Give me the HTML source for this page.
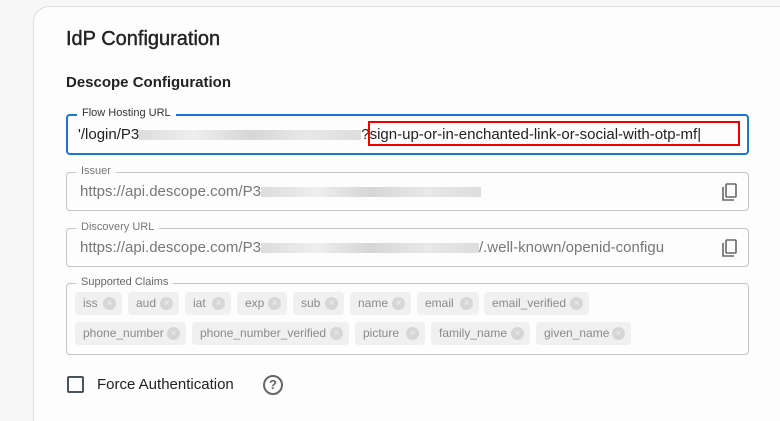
<!DOCTYPE html><html style="width:780px;height:421px;overflow:hidden"><head><style>
body{margin:0;width:780px;height:421px;background:#f7f7f7;font-family:"Liberation Sans",sans-serif;position:relative;overflow:hidden}
.card{position:absolute;left:33px;top:6px;width:760px;height:430px;background:#fdfdfd;border:1px solid #ddd;border-radius:16px}
.a{position:absolute}
.f{position:absolute;left:66px;width:683px;border:1px solid #c4c4c4;border-radius:4px;box-sizing:border-box}
.lab{position:absolute;top:-8px;left:9px;background:#fdfdfd;padding:0 5px;font-size:11px;color:#777}
.v{position:absolute;left:13px;font-size:15px;color:#777;white-space:nowrap}
.blur{display:inline-block;height:10px;background:linear-gradient(90deg,#ddd,#eee,#d6d6d6,#e8e8e8,#ddd);vertical-align:middle}
.chip{position:absolute;height:23px;background:#f0f0f0;border-radius:4px;font-size:12px;color:#8a8a8a;line-height:23px;padding-left:8px;box-sizing:border-box}
.chip i{position:absolute;right:6px;top:5px;width:13px;height:13px;border-radius:50%;background:#d6d6d6;color:#f0f0f0;font-style:normal;font-size:10px;line-height:13px;text-align:center}
</style></head><body>
<div class="card"></div>
<div class="a" style="left:66px;top:28px;font-size:20px;color:#222;-webkit-text-stroke:0.4px #222">IdP Configuration</div>
<div class="a" style="left:66px;top:74px;font-size:15px;font-weight:bold;color:#222">Descope Configuration</div>
<div class="f" style="top:114px;height:41px;border:2px solid #1976d2">
<div class="lab" style="color:#333;top:-9px">Flow Hosting URL</div>
<div class="v" style="left:10px;top:10px;color:#222">'/login/P3<span class="blur" style="width:222px"></span>?sign-up-or-in-enchanted-link-or-social-with-otp-mf|</div>
<div class="a" style="left:300px;top:5px;width:372px;height:25px;border:2px solid #e00;box-sizing:border-box"></div>
</div>
<div class="f" style="top:172px;height:39px"><div class="lab">Issuer</div>
<div class="v" style="top:10px">https://api.descope.com/P3<span class="blur" style="width:220px"></span></div>
<svg class="a" style="left:653px;top:9px" width="18" height="20" viewBox="0 0 18 20"><path d="M3 5v13h11" fill="none" stroke="#666" stroke-width="1.6"/><rect x="6" y="2" width="10" height="13" rx="1" fill="none" stroke="#666" stroke-width="1.6"/></svg></div>
<div class="f" style="top:228px;height:39px"><div class="lab">Discovery URL</div>
<div class="v" style="top:10px">https://api.descope.com/P3<span class="blur" style="width:218px"></span>/.well-known/openid-configu</div>
<svg class="a" style="left:653px;top:9px" width="18" height="20" viewBox="0 0 18 20"><path d="M3 5v13h11" fill="none" stroke="#666" stroke-width="1.6"/><rect x="6" y="2" width="10" height="13" rx="1" fill="none" stroke="#666" stroke-width="1.6"/></svg></div>
<div class="f" style="top:283px;height:72px"><div class="lab" style="color:#666">Supported Claims</div></div>
<div class="chip" style="left:75px;top:292px;width:47px">iss<i>×</i></div>
<div class="chip" style="left:128px;top:292px;width:51px">aud<i>×</i></div>
<div class="chip" style="left:185px;top:292px;width:46px">iat<i>×</i></div>
<div class="chip" style="left:237px;top:292px;width:50px">exp<i>×</i></div>
<div class="chip" style="left:293px;top:292px;width:51px">sub<i>×</i></div>
<div class="chip" style="left:350px;top:292px;width:61px">name<i>×</i></div>
<div class="chip" style="left:417px;top:292px;width:62px">email<i>×</i></div>
<div class="chip" style="left:484px;top:292px;width:105px">email_verified<i>×</i></div>
<div class="chip" style="left:75px;top:322px;width:111px">phone_number<i>×</i></div>
<div class="chip" style="left:192px;top:322px;width:157px">phone_number_verified<i>×</i></div>
<div class="chip" style="left:355px;top:322px;width:70px">picture<i>×</i></div>
<div class="chip" style="left:431px;top:322px;width:99px">family_name<i>×</i></div>
<div class="chip" style="left:536px;top:322px;width:95px">given_name<i>×</i></div>
<div class="a" style="left:67px;top:376px;width:17px;height:17px;border:2px solid #4a525a;border-radius:2px;box-sizing:border-box"></div>
<div class="a" style="left:97px;top:376px;font-size:15px;color:#222">Force Authentication</div>
<div class="a" style="left:263px;top:375px;width:20px;height:20px;border:2px solid #666;border-radius:50%;box-sizing:border-box;text-align:center;font-size:13px;line-height:16px;color:#666;font-weight:bold">?</div>
</body></html>
